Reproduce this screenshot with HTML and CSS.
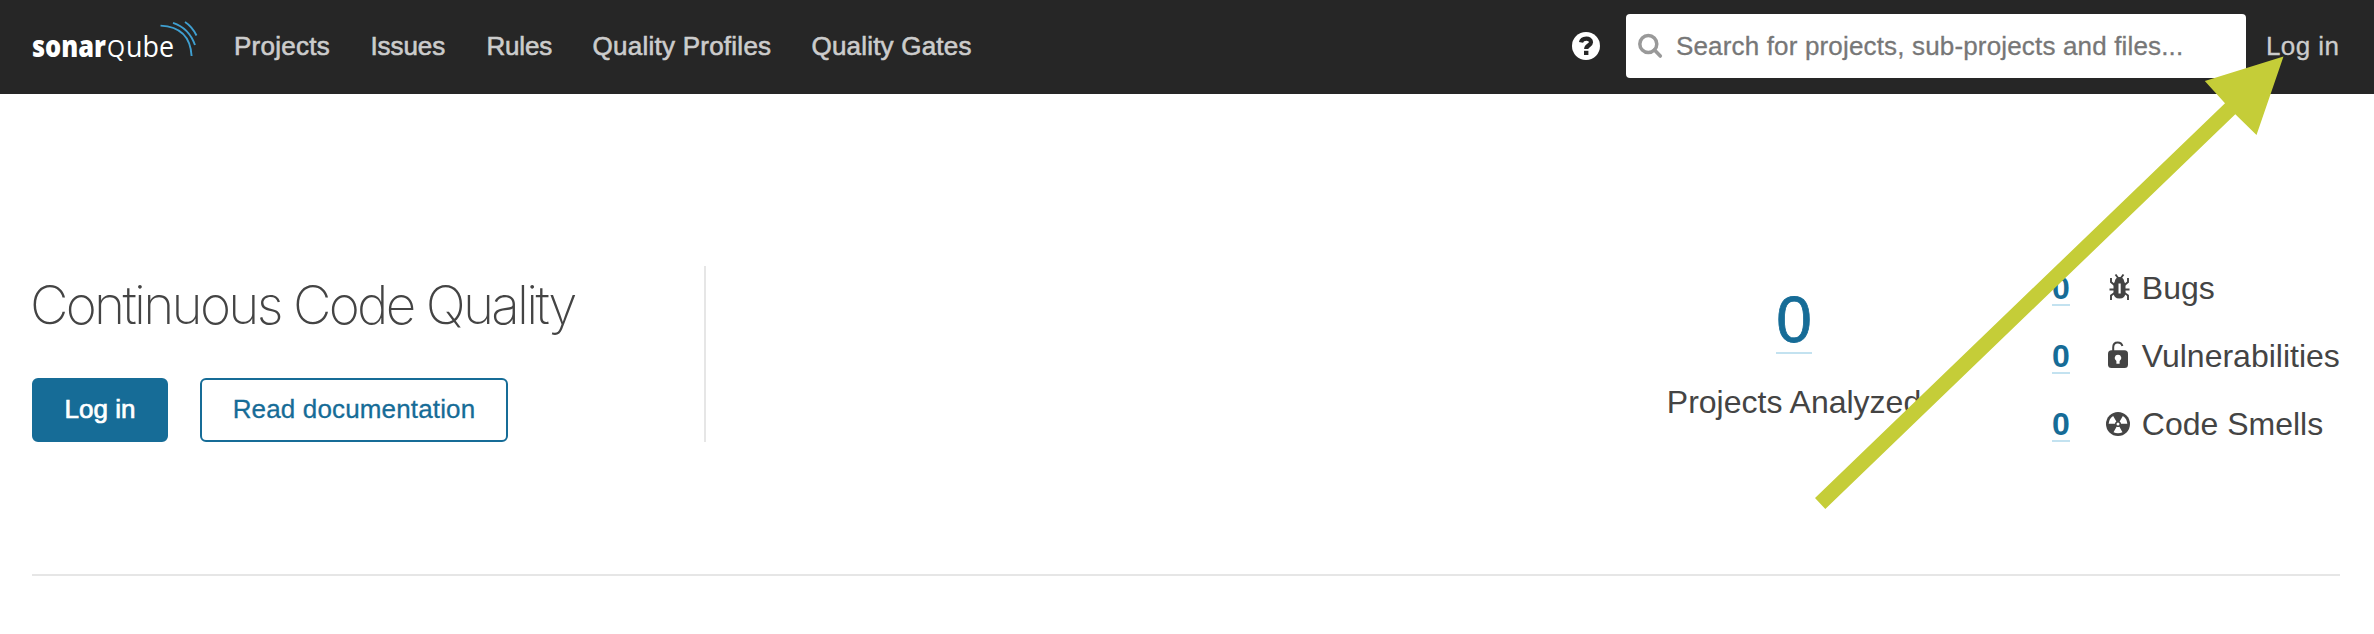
FILE: index.html
```html
<!DOCTYPE html>
<html lang="en">
<head>
<meta charset="utf-8">
<title>SonarQube</title>
<link rel="stylesheet" href="styles.css">
</head>
<body>
<header class="navbar">
  <a class="logo">
    <svg width="172" height="64" viewBox="28 14 172 64">
      <text class="logo-text" x="32" y="57" fill="#fff"><tspan class="logo-bold" textLength="74" lengthAdjust="spacingAndGlyphs">sonar</tspan><tspan class="logo-q" dx="1" textLength="18" lengthAdjust="spacingAndGlyphs">Q</tspan><tspan dx="1" textLength="48" lengthAdjust="spacingAndGlyphs">ube</tspan></text>
      <g fill="none" stroke="#3f9fd0" stroke-width="1.9">
        <path d="M160.500 25.600Q190 27 191.600 56"/>
        <path d="M173 22.800Q189 28 195 45"/>
        <path d="M185 22Q192 26.500 196.500 35.500"/>
      </g>
    </svg>
  </a>
  <nav class="menu">
    <a class="menu-projects">Projects</a>
    <a class="menu-issues">Issues</a>
    <a class="menu-rules">Rules</a>
    <a class="menu-profiles">Quality Profiles</a>
    <a class="menu-gates">Quality Gates</a>
  </nav>
  <svg class="help" width="28" height="28" viewBox="0 0 28 28">
    <circle cx="14" cy="14" r="14" fill="#fff"/>
    <path d="M9 10.400C9.800 5.600 19 5.200 19 10.300C19 13.600 14.200 13.200 14.200 17" fill="none" stroke="#262626" stroke-width="4.200"/>
    <rect x="12" y="18.800" width="4.400" height="4.200" fill="#262626"/>
  </svg>
  <div class="search">
    <svg width="26" height="26" viewBox="0 0 26 26" fill="none" stroke="#999">
      <circle cx="10.300" cy="11" r="8.500" stroke-width="3.500"/>
      <path d="M16.500 17l5.800 6" stroke-width="3.600" stroke-linecap="round"/>
    </svg>
    <span class="placeholder">Search for projects, sub-projects and files...</span>
  </div>
  <a class="login">Log in</a>
</header>
<main class="page">
  <section class="hero">
    <div class="intro">
      <h1 class="title">Continuous Code Quality</h1>
      <div class="actions">
        <a class="button button-primary">Log in</a>
        <a class="button button-docs">Read documentation</a>
      </div>
    </div>
    <div class="analyzed">
      <a class="big-number">0</a>
      <span class="analyzed-label">Projects Analyzed</span>
    </div>
    <div class="issues">
      <div class="issue">
        <a class="count">0</a>
        <svg class="icon" width="24" height="28" viewBox="0 0 24 28">
          <g fill="none" stroke="#444" stroke-width="1.900">
            <path d="M9.500 1.500l3 4M17.500 1.500L14.500 5.500M5 5v4l4 3.500M22 5v4l-4 3.500M3.500 16.500H23.500M8.500 20L5 22.500V27M18.500 20l3.500 2.500V27"/>
          </g>
          <path d="M8.800 8.500Q9.500 4 13.500 4T18.200 8.500Q19.500 10 19.500 13v6.500q0 6-6 6t-6-6V13q0-3 1.300-4.500z" fill="#444"/>
          <path d="M12.500 10.500h2.200v10h-2.200z" fill="#fff"/>
        </svg>
        <span class="label">Bugs</span>
      </div>
      <div class="issue">
        <a class="count">0</a>
        <svg class="icon" width="24" height="28" viewBox="0 0 24 28">
          <path d="M7.200 12V6.200Q7.200 1.400 11.700 1.400Q15.500 1.400 16.400 5" fill="none" stroke="#444" stroke-width="2"/>
          <rect x="2" y="9.300" width="20" height="17.700" rx="3.500" fill="#444"/>
          <path d="M12 13.800a3.300 3.300 0 0 1 1.600 6.200v2.700h-3.200v-2.700A3.300 3.300 0 0 1 12 13.800z" fill="#fff"/>
        </svg>
        <span class="label">Vulnerabilities</span>
      </div>
      <div class="issue">
        <a class="count">0</a>
        <svg class="icon" width="24" height="28" viewBox="0 0 24 28">
          <circle cx="12" cy="15" r="12" fill="#444"/>
          <g fill="#fff">
            <path id="blade" d="M10.600 17.700L7.500 23.200Q12 25.400 16.500 23.200L13.400 17.700Q12 18.400 10.600 17.700z"/>
            <use href="#blade" transform="rotate(120 12 15)"/>
            <use href="#blade" transform="rotate(240 12 15)"/>
            <circle cx="12" cy="15" r="1.500"/>
          </g>
        </svg>
        <span class="label">Code Smells</span>
      </div>
    </div>
  </section>
  <hr class="rule">
</main>
<svg class="arrow" width="2374" height="634" viewBox="0 0 2374 634">
  <path d="M2283.500 56.500L2256.500 135L2235.300 114.300L1825.300 509L1815 498L2225 103.200L2204.800 81z" fill="#c5cd38"/>
</svg>
</body>
</html>
```
FILE: styles.css
```css
* { box-sizing: border-box; }
body {
  margin: 0;
  position: relative;
  width: 2374px;
  height: 634px;
  overflow: hidden;
  background: #fff;
  color: #444;
  font-family: "Liberation Sans", Arial, sans-serif;
  font-size: 26px;
}
.navbar {
  display: flex;
  align-items: center;
  height: 94px;
  padding: 0 34px 2px 28px;
  background: #262626;
  color: #ccc;
}
.logo { width: 172px; height: 64px; }
.logo svg { display: block; }
.logo-text { font-family: "Open Sans", sans-serif; font-size: 30px; }
.logo-bold { font-weight: 800; }
.logo-q { font-size: 23.5px; }
.menu {
  display: flex;
  margin-left: 34px;
  white-space: nowrap;
  line-height: 30px;
  letter-spacing: 0.25px;
  -webkit-text-stroke: 0.6px #ccc;
}
.menu-projects { width: 136.5px; }
.menu-issues { width: 116px; letter-spacing: -0.1px; }
.menu-rules { width: 106px; letter-spacing: -0.2px; }
.menu-profiles { width: 219px; }
.menu-gates { letter-spacing: 0.2px; }
.help { margin-left: auto; }
.search {
  display: flex;
  align-items: center;
  width: 620px;
  height: 64px;
  margin-left: 26px;
  padding-left: 12px;
  border-radius: 4px;
  background: #fff;
}
.search svg { margin-top: -1px; }
.placeholder {
  margin-left: 12px;
  color: #777;
  white-space: nowrap;
  letter-spacing: 0.16px;
  -webkit-text-stroke: 0.3px #777;
}
.login {
  width: 74px;
  margin-left: 20px;
  letter-spacing: 0.4px;
  white-space: nowrap;
  -webkit-text-stroke: 0.3px #ccc;
}
.page { padding: 172px 34px 0 32px; }
.hero { display: flex; height: 176px; }
.intro { width: 674px; border-right: 2px solid #e6e6e6; }
.title {
  margin: 7px 0 0 -2px;
  font-family: Inter, sans-serif;
  font-size: 53px;
  font-weight: 200;
  line-height: 64px;
  letter-spacing: -2.7px;
  white-space: nowrap;
}
.actions { display: flex; gap: 32px; margin-top: 41px; }
.button {
  height: 64px;
  border: 2px solid #166c97;
  border-radius: 6px;
  line-height: 59px;
  text-align: center;
  white-space: nowrap;
  color: #166c97;
  -webkit-text-stroke: 0.3px currentColor;
}
.button-primary { width: 136px; background: #166c97; color: #fff; -webkit-text-stroke-width: 0.7px; }
.button-docs { width: 308px; letter-spacing: 0.15px; }
.analyzed {
  display: flex;
  flex-direction: column;
  align-items: center;
  width: 256px;
  margin-left: 960px;
  padding-top: 18px;
}
.big-number {
  height: 70px;
  border-bottom: 2px solid #c3e2f0;
  font-size: 64px;
  line-height: 73px;
  color: #166c97;
  -webkit-text-stroke: 0.8px #166c97;
}
.analyzed-label { margin-top: 30px; font-size: 32px; line-height: 36px; white-space: nowrap; }
.issues { display: flex; flex-direction: column; gap: 32px; margin-left: 130px; padding-top: 4px; }
.issue { display: flex; height: 36px; font-size: 32px; line-height: 36px; white-space: nowrap; }
.count { height: 36px; border-bottom: 2px solid #c3e2f0; font-weight: 700; color: #166c97; }
.icon { margin: 3px 12px 0 36px; }
.rule { height: 2px; margin: 132px 0 0; border: 0; background: #e6e6e6; }
.arrow { position: absolute; left: 0; top: 0; pointer-events: none; }
```
